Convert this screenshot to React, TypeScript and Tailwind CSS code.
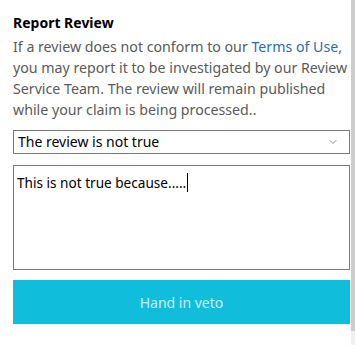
import { ChevronDown } from "lucide-react";

const font = { fontFamily: '"Noto Sans", "Open Sans", sans-serif' };

export default function App() {
  return (
    <div className="flex h-[345px] w-[355px] bg-white" style={font}>
      <div className="flex min-w-0 flex-1 flex-col pl-[13px] pr-[1px] pt-[13px]">
        <h2 className="text-[14px] font-bold leading-[20px] text-black">Report Review</h2>
        <p className="mt-[3px] whitespace-nowrap text-[14.2px] leading-[21px] text-[#5a5a5a]">
          If a review does not conform to our <span className="text-[#2b6cb0]">Terms of Use</span>,
          <br />
          you may report it to be investigated by our Review
          <br />
          Service Team. The review will remain published
          <br />
          while your claim is being processed..
        </p>

        <div className="mt-[10px] flex h-[24px] items-center justify-between border border-[#7a7a7a] pl-[4px] pr-[10px] text-[14px] text-black">
          <span className="leading-none">The review is not true</span>
          <ChevronDown className="size-[12px] text-[#666]" strokeWidth={1.5} aria-hidden />
        </div>

        <div className="mt-[11px] h-[105px] border border-[#7a7a7a] px-[3px] pt-[3px] text-[13.6px] leading-[20px] text-black">
          This is not true because.....
          <span className="ml-[1px] inline-block h-[19px] w-px translate-y-[4px] bg-black align-baseline" />
        </div>

        <button
          type="button"
          className="mt-[10px] h-[44px] w-full bg-[#10bedc] text-[14px] text-[#c8eef6]"
        >
          Hand in veto
        </button>
      </div>
      <div className="flex w-[4px] shrink-0 flex-col">
        <div className="h-[331px] bg-[#cdcdcd]" />
        <div className="flex-1 bg-[#f0f0f0]" />
      </div>
    </div>
  );
}
